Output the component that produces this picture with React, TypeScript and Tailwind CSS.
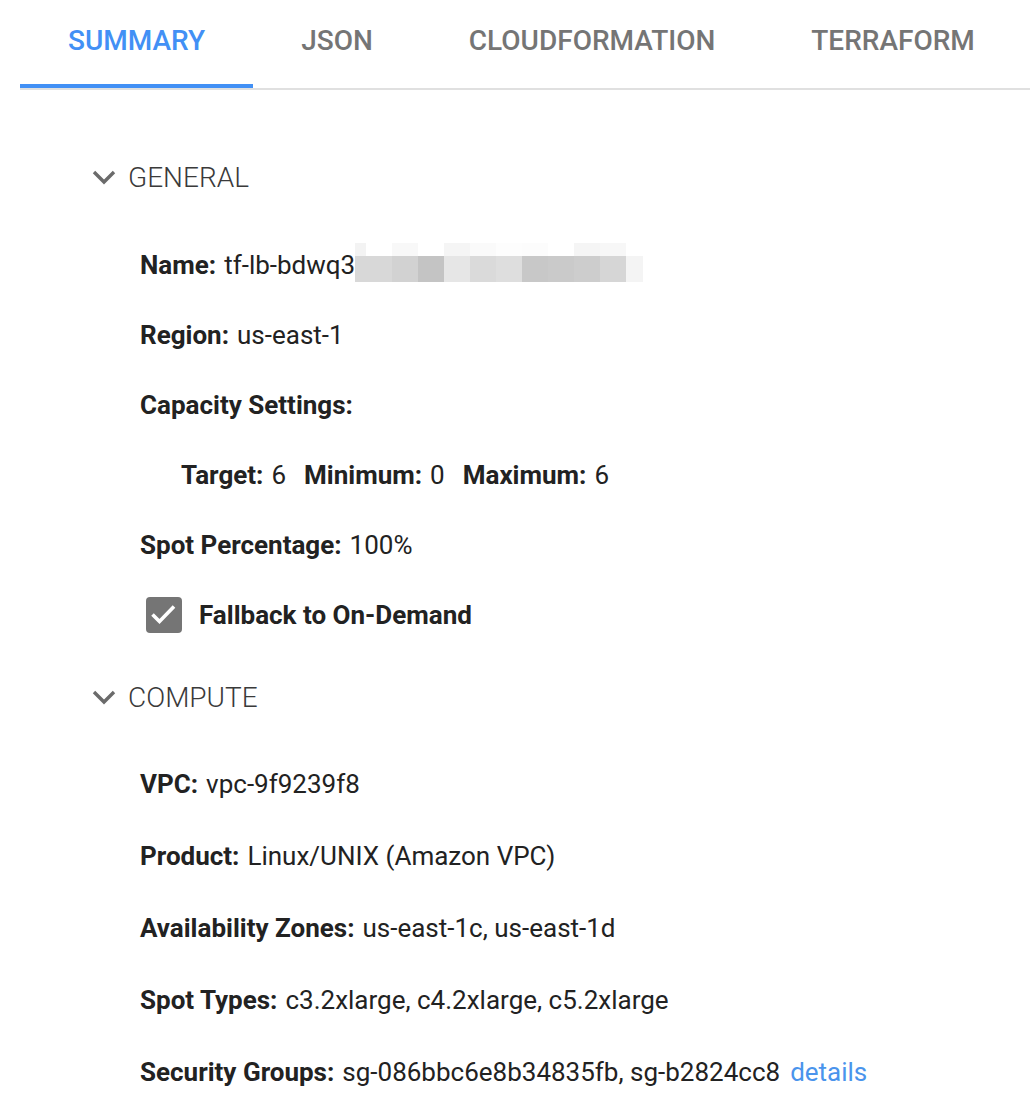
import React from "react";

const tabs = ["SUMMARY", "JSON", "CLOUDFORMATION", "TERRAFORM"];

const redactTop = ["#f3f3f3", "#ffffff", "#f8f8f8", "#ffffff", "#f5f5f5", "#fafafa", "#fdfdfd", "#fcfcfc", "#ffffff", "#f5f5f5", "#f7f7f7", "#ffffff"];
const redactBottom = ["#d8d8d8", "#d2d2d2", "#c4c4c4", "#e6e6e6", "#dadada", "#dedede", "#c8c8c8", "#cacaca", "#cdcdcd", "#d6d6d6", "#f4f4f4"];
const redactTopW = [11, 26, 26, 26, 26, 26, 26, 26, 26, 26, 26, 17];
const redactBottomW = [37, 26, 26, 26, 26, 26, 26, 26, 26, 26, 17];

function Chevron() {
  return (
    <svg width="26" height="18" viewBox="0 0 26 18" className="shrink-0">
      <polyline points="3,3 13,13 23,3" fill="none" stroke="#6b6b6b" strokeWidth="3.4" />
    </svg>
  );
}

function SectionHeader({ title, mt }: { title: string; mt: string }) {
  return (
    <div className={`flex items-center h-[70px] pl-[91px] gap-[11px] ${mt}`}>
      <Chevron />
      <span className="text-[28px] font-light text-[#3a3a3a]">{title}</span>
    </div>
  );
}

function Row({ label, value, h, children }: { label: string; value?: string; h: string; children?: React.ReactNode }) {
  return (
    <div className={`flex items-center pl-[140px] ${h}`}>
      <span className="font-bold">{label}</span>
      {value !== undefined && <span className="ml-[8px]">{value}</span>}
      {children}
    </div>
  );
}

function Redacted() {
  return (
    <div className="flex flex-col mb-[5px]">
      <div className="flex h-[13px]">
        {redactTop.map((c, i) => (
          <div key={i} className="h-full" style={{ background: c, width: redactTopW[i] }} />
        ))}
      </div>
      <div className="flex h-[26px]">
        {redactBottom.map((c, i) => (
          <div key={i} className="h-full" style={{ background: c, width: redactBottomW[i] }} />
        ))}
      </div>
    </div>
  );
}

export default function App() {
  return (
    <div
      className="w-[1030px] h-[1114px] bg-white text-[26px] text-[#222222] overflow-hidden"
      style={{ fontFamily: "Roboto, 'Liberation Sans', sans-serif" }}
    >
      {/* tabs */}
      <div className="ml-[20px] flex h-[90px] border-b-2 border-[#e0e0e0]">
        {tabs.map((t, i) => (
          <div
            key={t}
            className={`h-[88px] px-[48px] pb-[2px] flex items-center text-[28px] font-medium ${
              i === 0 ? "text-[#4290f5] border-b-4 border-[#4290f5]" : "text-[#757575] border-b-4 border-transparent"
            }`}
          >
            {t}
          </div>
        ))}
      </div>

      <SectionHeader title="GENERAL" mt="mt-[53px]" />
      <div className="mt-[17px]">
        <Row label="Name:" value="tf-lb-bdwq3" h="h-[70px]">
          <Redacted />
        </Row>
        <Row label="Region:" value="us-east-1" h="h-[70px]" />
        <Row label="Capacity Settings:" h="h-[70px]" />
        <div className="flex items-center h-[70px] pl-[181px]">
          <span className="font-bold">Target:</span>
          <span className="ml-[8px]">6</span>
          <span className="font-bold ml-[18px]">Minimum:</span>
          <span className="ml-[8px]">0</span>
          <span className="font-bold ml-[18px]">Maximum:</span>
          <span className="ml-[8px]">6</span>
        </div>
        <Row label="Spot Percentage:" value="100%" h="h-[70px]" />
        <div className="flex items-center h-[70px] pl-[146px]">
          <div className="w-[36px] h-[36px] rounded-[4px] bg-[#757575] flex items-center justify-center">
            <svg width="36" height="36" viewBox="0 0 36 36">
              <polyline points="6.5,17.5 13.5,24.5 28,9.5" fill="none" stroke="#ffffff" strokeWidth="3.6" />
            </svg>
          </div>
          <span className="font-bold ml-[17px]">Fallback to On-Demand</span>
        </div>
      </div>

      <SectionHeader title="COMPUTE" mt="mt-[13px]" />
      <div className="mt-[15px]">
        <Row label="VPC:" value="vpc-9f9239f8" h="h-[72px]" />
        <Row label="Product:" value="Linux/UNIX (Amazon VPC)" h="h-[72px]" />
        <Row label="Availability Zones:" value="us-east-1c, us-east-1d" h="h-[72px]" />
        <Row label="Spot Types:" value="c3.2xlarge, c4.2xlarge, c5.2xlarge" h="h-[72px]" />
        <Row label="Security Groups:" value="sg-086bbc6e8b34835fb, sg-b2824cc8" h="h-[72px]">
          <a className="ml-[10px] text-[#4a94ec] cursor-pointer">details</a>
        </Row>
      </div>
    </div>
  );
}
